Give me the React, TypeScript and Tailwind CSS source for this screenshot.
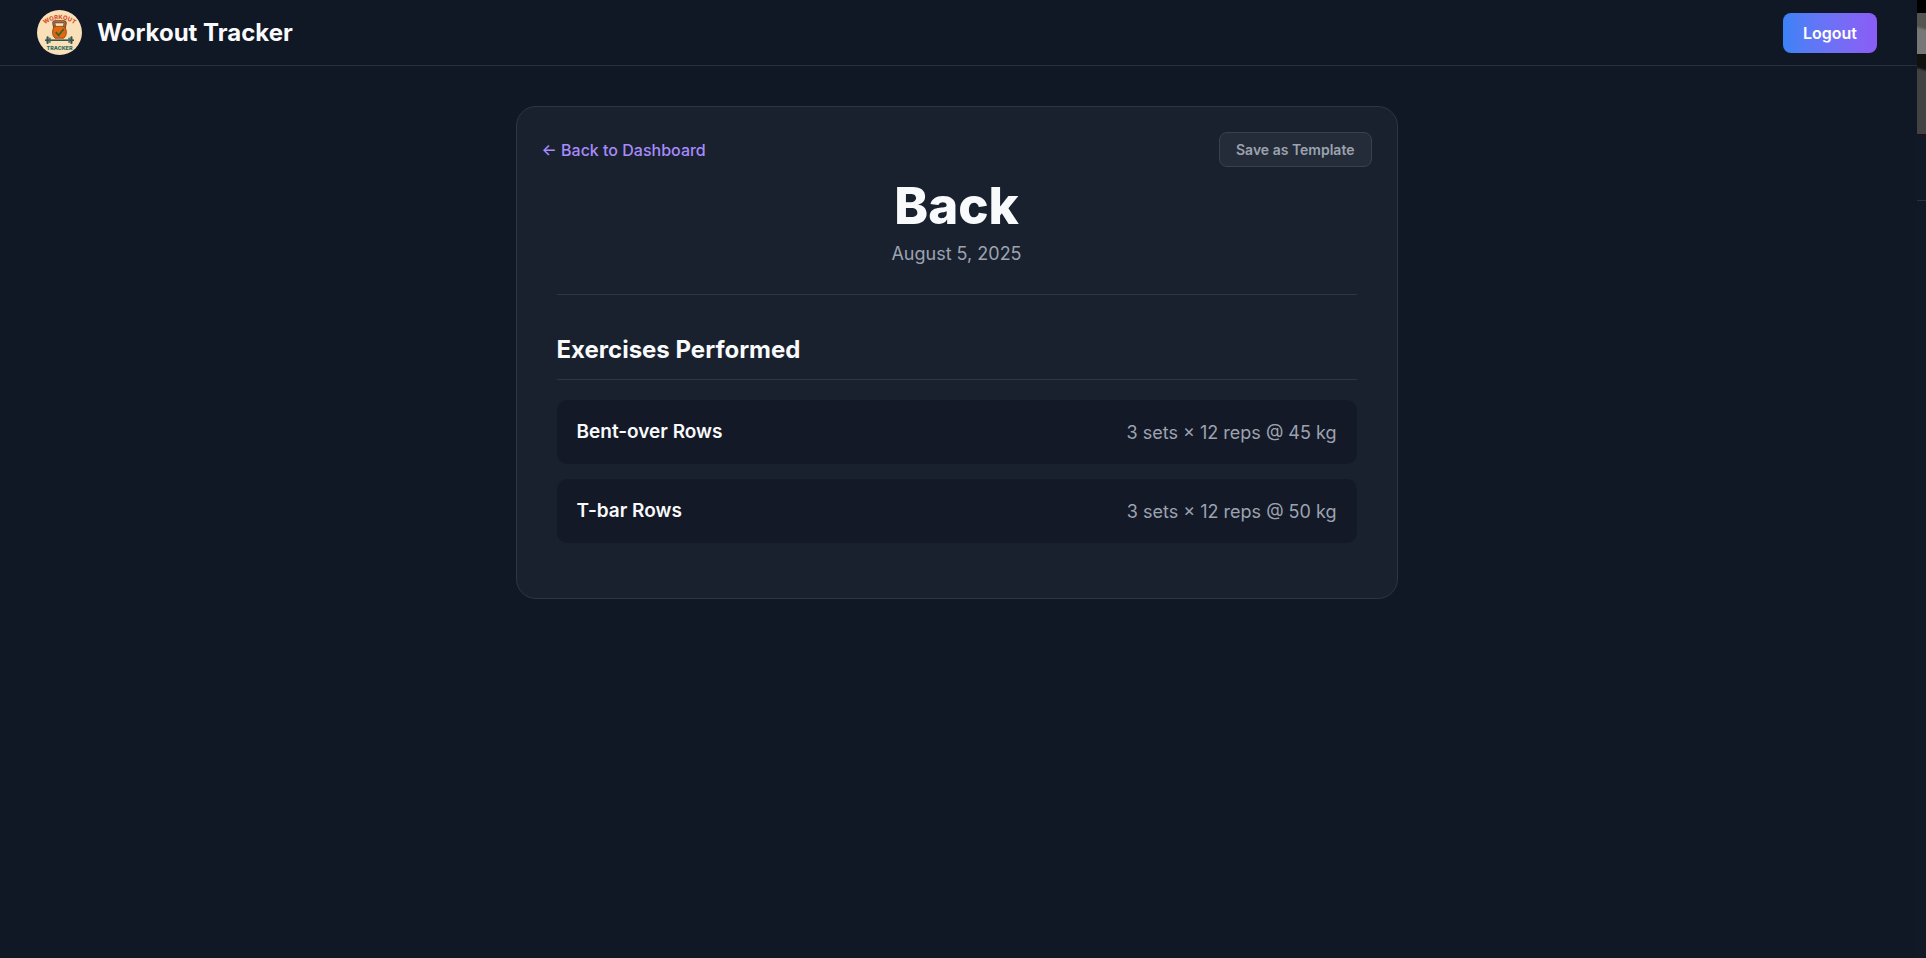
const exercises = [
  { name: 'Bent-over Rows', detail: '3 sets × 12 reps @ 45 kg' },
  { name: 'T-bar Rows', detail: '3 sets × 12 reps @ 50 kg' },
];

function Logo() {
  return (
    <svg viewBox="0 0 45 45" className="size-[45px] shrink-0" role="img" aria-label="Workout Tracker logo">
      <defs>
        <path id="logo-arc" d="M7.6 14.6 Q22.5 3.6 37.6 14.6" />
      </defs>
      <circle cx="22.5" cy="22.5" r="22.5" fill="#fae0b8" />
      <text fontFamily="Inter, sans-serif" fontWeight="800" fontSize="6" fill="#d9532c" textAnchor="middle">
        <textPath href="#logo-arc" startOffset="50%">WORKOUT</textPath>
      </text>
      <path d="M17.8 18.5 L16.8 13.2 Q16.7 11.7 18.2 11.7 H26.8 Q28.3 11.7 28.2 13.2 L27.2 18.5" fill="none" stroke="#4b4a3c" strokeWidth="3" />
      <path d="M17.8 18.5 L16.9 13.2 Q16.8 11.8 18.2 11.8 H26.8 Q28.2 11.8 28.1 13.2 L27.2 18.5" fill="none" stroke="#c8612a" strokeWidth="1.5" />
      <path d="M17.6 16.4 H27.2 Q29.4 18.6 29.4 22.2 Q29.4 26 26.8 28.2 H18 Q15.5 26 15.5 22.2 Q15.5 18.6 17.6 16.4Z" fill="#e4660f" stroke="#8b4a1c" strokeWidth="0.9" />
      <path d="M18.8 22.2 L21.6 25.4 L26.8 19" fill="none" stroke="#34652f" strokeWidth="1.8" />
      <path d="M8 30.2 H37" stroke="#31564f" strokeWidth="1.6" />
      <path d="M10.6 27.4 V33 M34.4 27.4 V33" stroke="#31564f" strokeWidth="2.2" strokeLinecap="round" />
      <path d="M12.9 28.2 V32.2 M32.1 28.2 V32.2" stroke="#47695f" strokeWidth="1.6" strokeLinecap="round" />
      <text x="22.5" y="39.6" fontFamily="Inter, sans-serif" fontWeight="800" fontSize="5.4" fill="#2c6b5c" textAnchor="middle">
        TRACKER
      </text>
    </svg>
  );
}

function Header() {
  return (
    <header className="flex items-center justify-between border-b border-[#2a313d] py-[10px] pr-10 pl-[37px]">
      <div className="flex items-center gap-[15px]">
        <Logo />
        <span className="text-2xl font-bold">Workout Tracker</span>
      </div>
      <button
        type="button"
        className="h-10 rounded-lg bg-linear-to-r from-[#3b82f6] to-[#8b5cf6] px-5 text-base font-semibold text-white"
      >
        Logout
      </button>
    </header>
  );
}

function EdgeStrip() {
  return (
    <div aria-hidden="true" className="flex w-[9px] shrink-0 flex-col bg-[#111827]">
      <div className="h-[13px] bg-black" />
      <div className="h-[41px] bg-linear-[195deg,#545451_34%,#777777_42%]" />
      <div className="h-[80px] bg-linear-[195deg,#11110e_18%,#424242_22%]" />
      <div className="h-px bg-[#3a0505]" />
      <div className="h-[65px]" />
      <div className="h-px bg-[#2a313d]" />
    </div>
  );
}

export default function App() {
  return (
    <div className="flex min-h-screen bg-[#101725] font-['Inter',sans-serif] text-[#f9fafb]">
      <div className="flex min-w-0 flex-1 flex-col">
        <Header />
        <main className="py-10 pr-5 pl-4">
          <article className="mx-auto max-w-[882px] rounded-[20px] border border-[#2e3643] bg-[#19212f] px-[25px] pt-[25px] pb-[55px]">
            <div className="flex items-center justify-between">
              <a href="#dashboard" className="text-base font-medium text-[#a78bfa]">
                ← Back to Dashboard
              </a>
              <button
                type="button"
                className="h-[35px] rounded-lg border border-[#3a414d] bg-[#252c39] px-4 text-sm font-semibold text-[#9ca3af]"
              >
                Save as Template
              </button>
            </div>
            <div className="px-[15px]">
              <div className="border-b border-[#2e3643] pt-[9px] pb-7 text-center">
                <h1 className="text-[51px] leading-[60px] font-extrabold">Back</h1>
                <p className="mt-1.5 text-[18px] leading-6 text-[#9ca3af]">August 5, 2025</p>
              </div>
              <h2 className="mt-10 border-b border-[#2e3643] pb-[14px] text-2xl leading-[30px] font-bold">
                Exercises Performed
              </h2>
              <ul className="mt-5 flex flex-col gap-[15px]">
                {exercises.map((exercise) => (
                  <li
                    key={exercise.name}
                    className="flex h-16 items-center justify-between gap-4 rounded-[10px] bg-[#141928] px-5"
                  >
                    <span className="text-[19px] font-semibold">{exercise.name}</span>
                    <span className="text-[18px] text-[#9ca3af]">{exercise.detail}</span>
                  </li>
                ))}
              </ul>
            </div>
          </article>
        </main>
      </div>
      <EdgeStrip />
    </div>
  );
}
